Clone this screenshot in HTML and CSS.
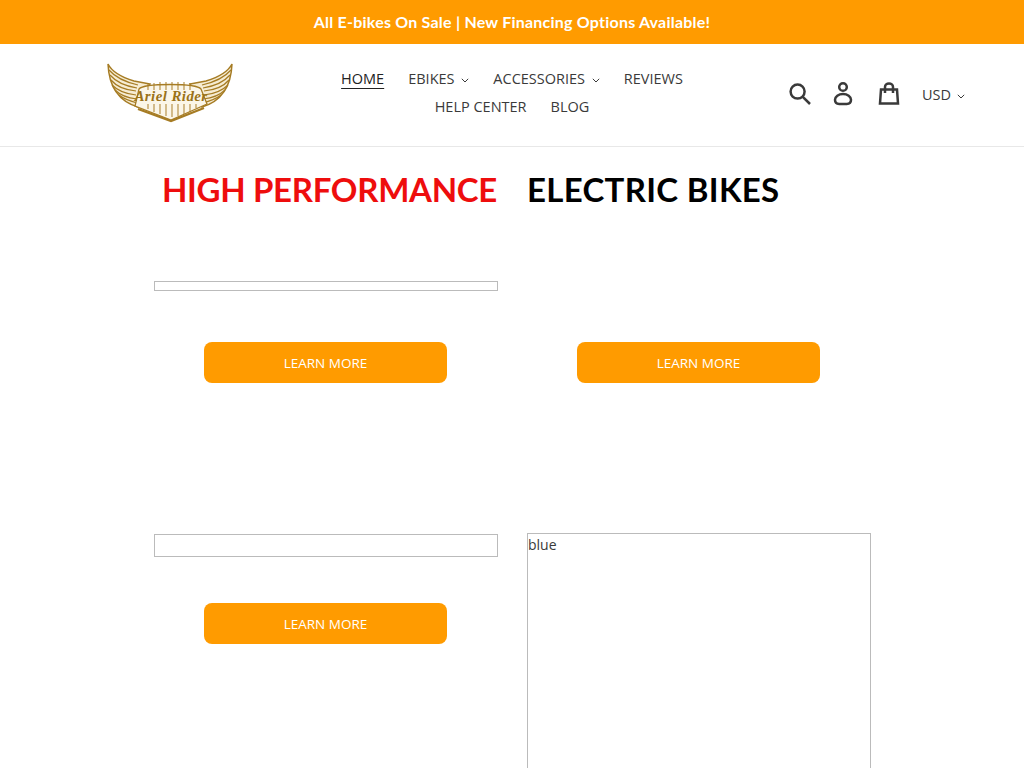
FILE: index.html
```html
<!DOCTYPE html>
<html lang="en">
<head>
  <meta charset="UTF-8">
  <title>Ariel Rider – Electric Bikes</title>
  <meta name="viewport" content="width=device-width, initial-scale=1">
  <link rel="stylesheet" href="styles.css">
</head>
<body>

  <div class="announcement">All E-bikes On Sale | New Financing Options Available!</div>

  <header class="site-header">
    <a href="#" class="logo">
      <svg width="128" height="60" viewBox="0 0 128 60" fill="none" stroke="#a67c24">
        <!-- wings -->
        <path d="M2 1C6 9 15 14 28 18L44 21 38 30 32 44C15 39 3 26 2 1Z" fill="#f6ecd2" stroke-width="1.500"/>
        <path d="M126 1C122 9 113 14 100 18L84 21 90 30 96 44C113 39 125 26 126 1Z" fill="#f6ecd2" stroke-width="1.500"/>
        <path d="M3 7C9 14 19 19 32 22M4 12C10 19 19 23 31 25M5 17C10 23 19 27 30 28M6 22C12 28 20 31 30 32M9 27C14 32 22 35 31 36M13 32C18 36 24 38 31 40" stroke-width="1.200"/>
        <path d="M125 7C119 14 109 19 96 22M124 12C118 19 109 23 97 25M123 17C118 23 109 27 98 28M122 22C116 28 108 31 98 32M119 27C114 32 106 35 97 36M115 32C110 36 104 38 97 40" stroke-width="1.200"/>
        <!-- shield -->
        <path d="M33 26C38 20 90 20 95 26L101 41 65 57 29 43Z" fill="#fbf6e8" stroke-width="1.300"/>
        <path d="M42 21V27M48 20V27M54 19V27M60 19V27M66 19V27M72 19V27M78 19V27M84 20V27" stroke-width="1.200" opacity=".8"/>
        <path d="M42 41V46M48 41V49M54 41V51M60 41V53M66 41V54M72 41V53M78 41V51M84 41V49M90 41V45" stroke-width="1.200" opacity=".8"/>
        <path d="M32 46L65 58 98 45" stroke-width="2.200"/>
        <text x="65" y="38" text-anchor="middle" class="logo-script">Ariel Rider</text>
      </svg>
    </a>

    <nav class="main-nav">
      <a href="#" class="active">HOME</a>
      <a href="#">EBIKES <svg class="caret" viewBox="0 0 8 5"><path d="M.8.8 4 4 7.2.8"/></svg></a>
      <a href="#">ACCESSORIES <svg class="caret" viewBox="0 0 8 5"><path d="M.8.8 4 4 7.2.8"/></svg></a>
      <a href="#">REVIEWS</a>
      <a href="#">HELP CENTER</a>
      <a href="#">BLOG</a>
    </nav>

    <div class="header-icons">
      <svg class="icon-search" width="24" height="24" viewBox="0 0 24 24"><circle cx="9.600" cy="9.600" r="7"/><path d="M14.800 14.800 22 22"/></svg>
      <svg class="icon-account" width="22" height="26" viewBox="0 0 22 26"><circle cx="11" cy="6" r="3.800"/><path d="M11 13c-4.500 0-8 2.500-8 5.800 0 2.900 1.800 4.200 4.200 4.200h7.600c2.400 0 4.200-1.300 4.200-4.200 0-3.300-3.500-5.800-8-5.800Z"/></svg>
      <svg class="icon-cart" width="24" height="24" viewBox="0 0 24 24"><path d="M4 7.500h16l1 14H3Z"/><path d="M8 11V5a4 3.500 0 0 1 8 0v6"/></svg>
      <span class="currency">USD <svg class="caret" viewBox="0 0 8 5"><path d="M.8.8 4 4 7.200.8"/></svg></span>
    </div>
  </header>

  <main class="page-width">
    <h1 class="page-title">
      <span class="red">HIGH PERFORMANCE</span>
      <span class="dark">ELECTRIC BIKES</span>
    </h1>

    <div class="product-grid">
      <div class="product product-one">
        <div class="video-box thin"></div>
        <a href="#" class="learn-btn">LEARN MORE</a>
      </div>
      <div class="product product-one">
        <div class="video-spacer"></div>
        <a href="#" class="learn-btn">LEARN MORE</a>
      </div>
      <div class="product product-two">
        <div class="video-box medium"></div>
        <a href="#" class="learn-btn">LEARN MORE</a>
      </div>
      <div class="product product-two">
        <div class="video-box tall">blue</div>
      </div>
    </div>
  </main>

</body>
</html>
```

FILE: styles.css
```css
html, body {
  height: 768px;
  overflow: hidden;
}

body {
  font-family: 'Open Sans', sans-serif;
  background: #fff;
  color: #3a3a3a;
  margin: 0;
}

a {
  color: inherit;
  text-decoration: none;
}

.announcement {
  background: #ff9b00;
  color: #fff;
  height: 44px;
  line-height: 44px;
  text-align: center;
  font-family: 'Lato', sans-serif;
  font-size: 16px;
  font-weight: 700;
  letter-spacing: 0.22px;
}

.site-header {
  display: grid;
  grid-template-columns: 300px 424px 300px;
  align-items: center;
  height: 102px;
  border-bottom: 1px solid #e8e8e8;
}

.logo {
  display: block;
  margin: -4px 0 0 106px;
  height: 60px;
}

.logo-script {
  font-family: 'Liberation Serif', serif;
  font-style: italic;
  font-weight: 700;
  font-size: 15px;
  letter-spacing: 0.4px;
  fill: #9a7218;
  stroke: none;
}

.main-nav {
  display: flex;
  flex-wrap: wrap;
  justify-content: center;
  gap: 0 24px;
  margin-top: -4px;
  font-size: 14.5px;
  line-height: 28px;
}

.main-nav a.active {
  color: #222;
  text-decoration: underline;
  text-underline-offset: 4px;
  text-decoration-thickness: 1px;
}

.caret {
  width: 8px;
  height: 5px;
  margin-left: 3px;
  vertical-align: 1px;
  fill: none;
  stroke: #3a3a3a;
  stroke-width: 1;
}

.header-icons {
  display: flex;
  align-items: center;
  margin-left: 64px;
  margin-top: -2px;
  fill: none;
  stroke: #3a3a3a;
  stroke-width: 2.500;
}

.icon-account {
  margin-left: 20px;
}

.icon-cart {
  margin-left: 23px;
}

.currency {
  margin-left: 21px;
  font-size: 14.5px;
  stroke: none;
}

.currency .caret {
  margin-left: 2px;
}

.page-width {
  width: 717px;
  margin-left: 154px;
}

.page-title {
  display: grid;
  grid-template-columns: 343px 344px;
  column-gap: 30px;
  margin: 0;
  height: 134px;
  padding-top: 22px;
  box-sizing: border-box;
  font-family: 'Lato', sans-serif;
  font-size: 33px;
  font-weight: 700;
  line-height: 40px;
}

.page-title .red {
  color: #ee0d0d;
  text-align: right;
  letter-spacing: -0.3px;
}

.page-title .dark {
  color: #000;
  letter-spacing: 0.3px;
}

.product-grid {
  display: grid;
  grid-template-columns: 344px 344px;
  column-gap: 29px;
}

.product {
  display: flex;
  flex-direction: column;
  align-items: center;
}

.product-one {
  height: 253px;
}

.video-box {
  width: 100%;
  box-sizing: border-box;
  border: 1px solid #bbb;
  font-size: 14px;
  line-height: 22px;
}

.video-box.thin {
  height: 10px;
}

.video-spacer {
  height: 10px;
}

.video-box.medium {
  height: 23px;
}

.video-box.tall {
  height: 236px;
  margin-top: -1px;
  border-bottom: 0;
}

.product-one .learn-btn {
  margin-top: 51px;
}

.product-two .learn-btn {
  margin-top: 46px;
}

.learn-btn {
  display: block;
  width: 243px;
  height: 41px;
  line-height: 43px;
  margin-left: -1px;
  background: #ff9b00;
  border-radius: 8px;
  color: #fff;
  text-align: center;
  font-size: 13.5px;
}
```
